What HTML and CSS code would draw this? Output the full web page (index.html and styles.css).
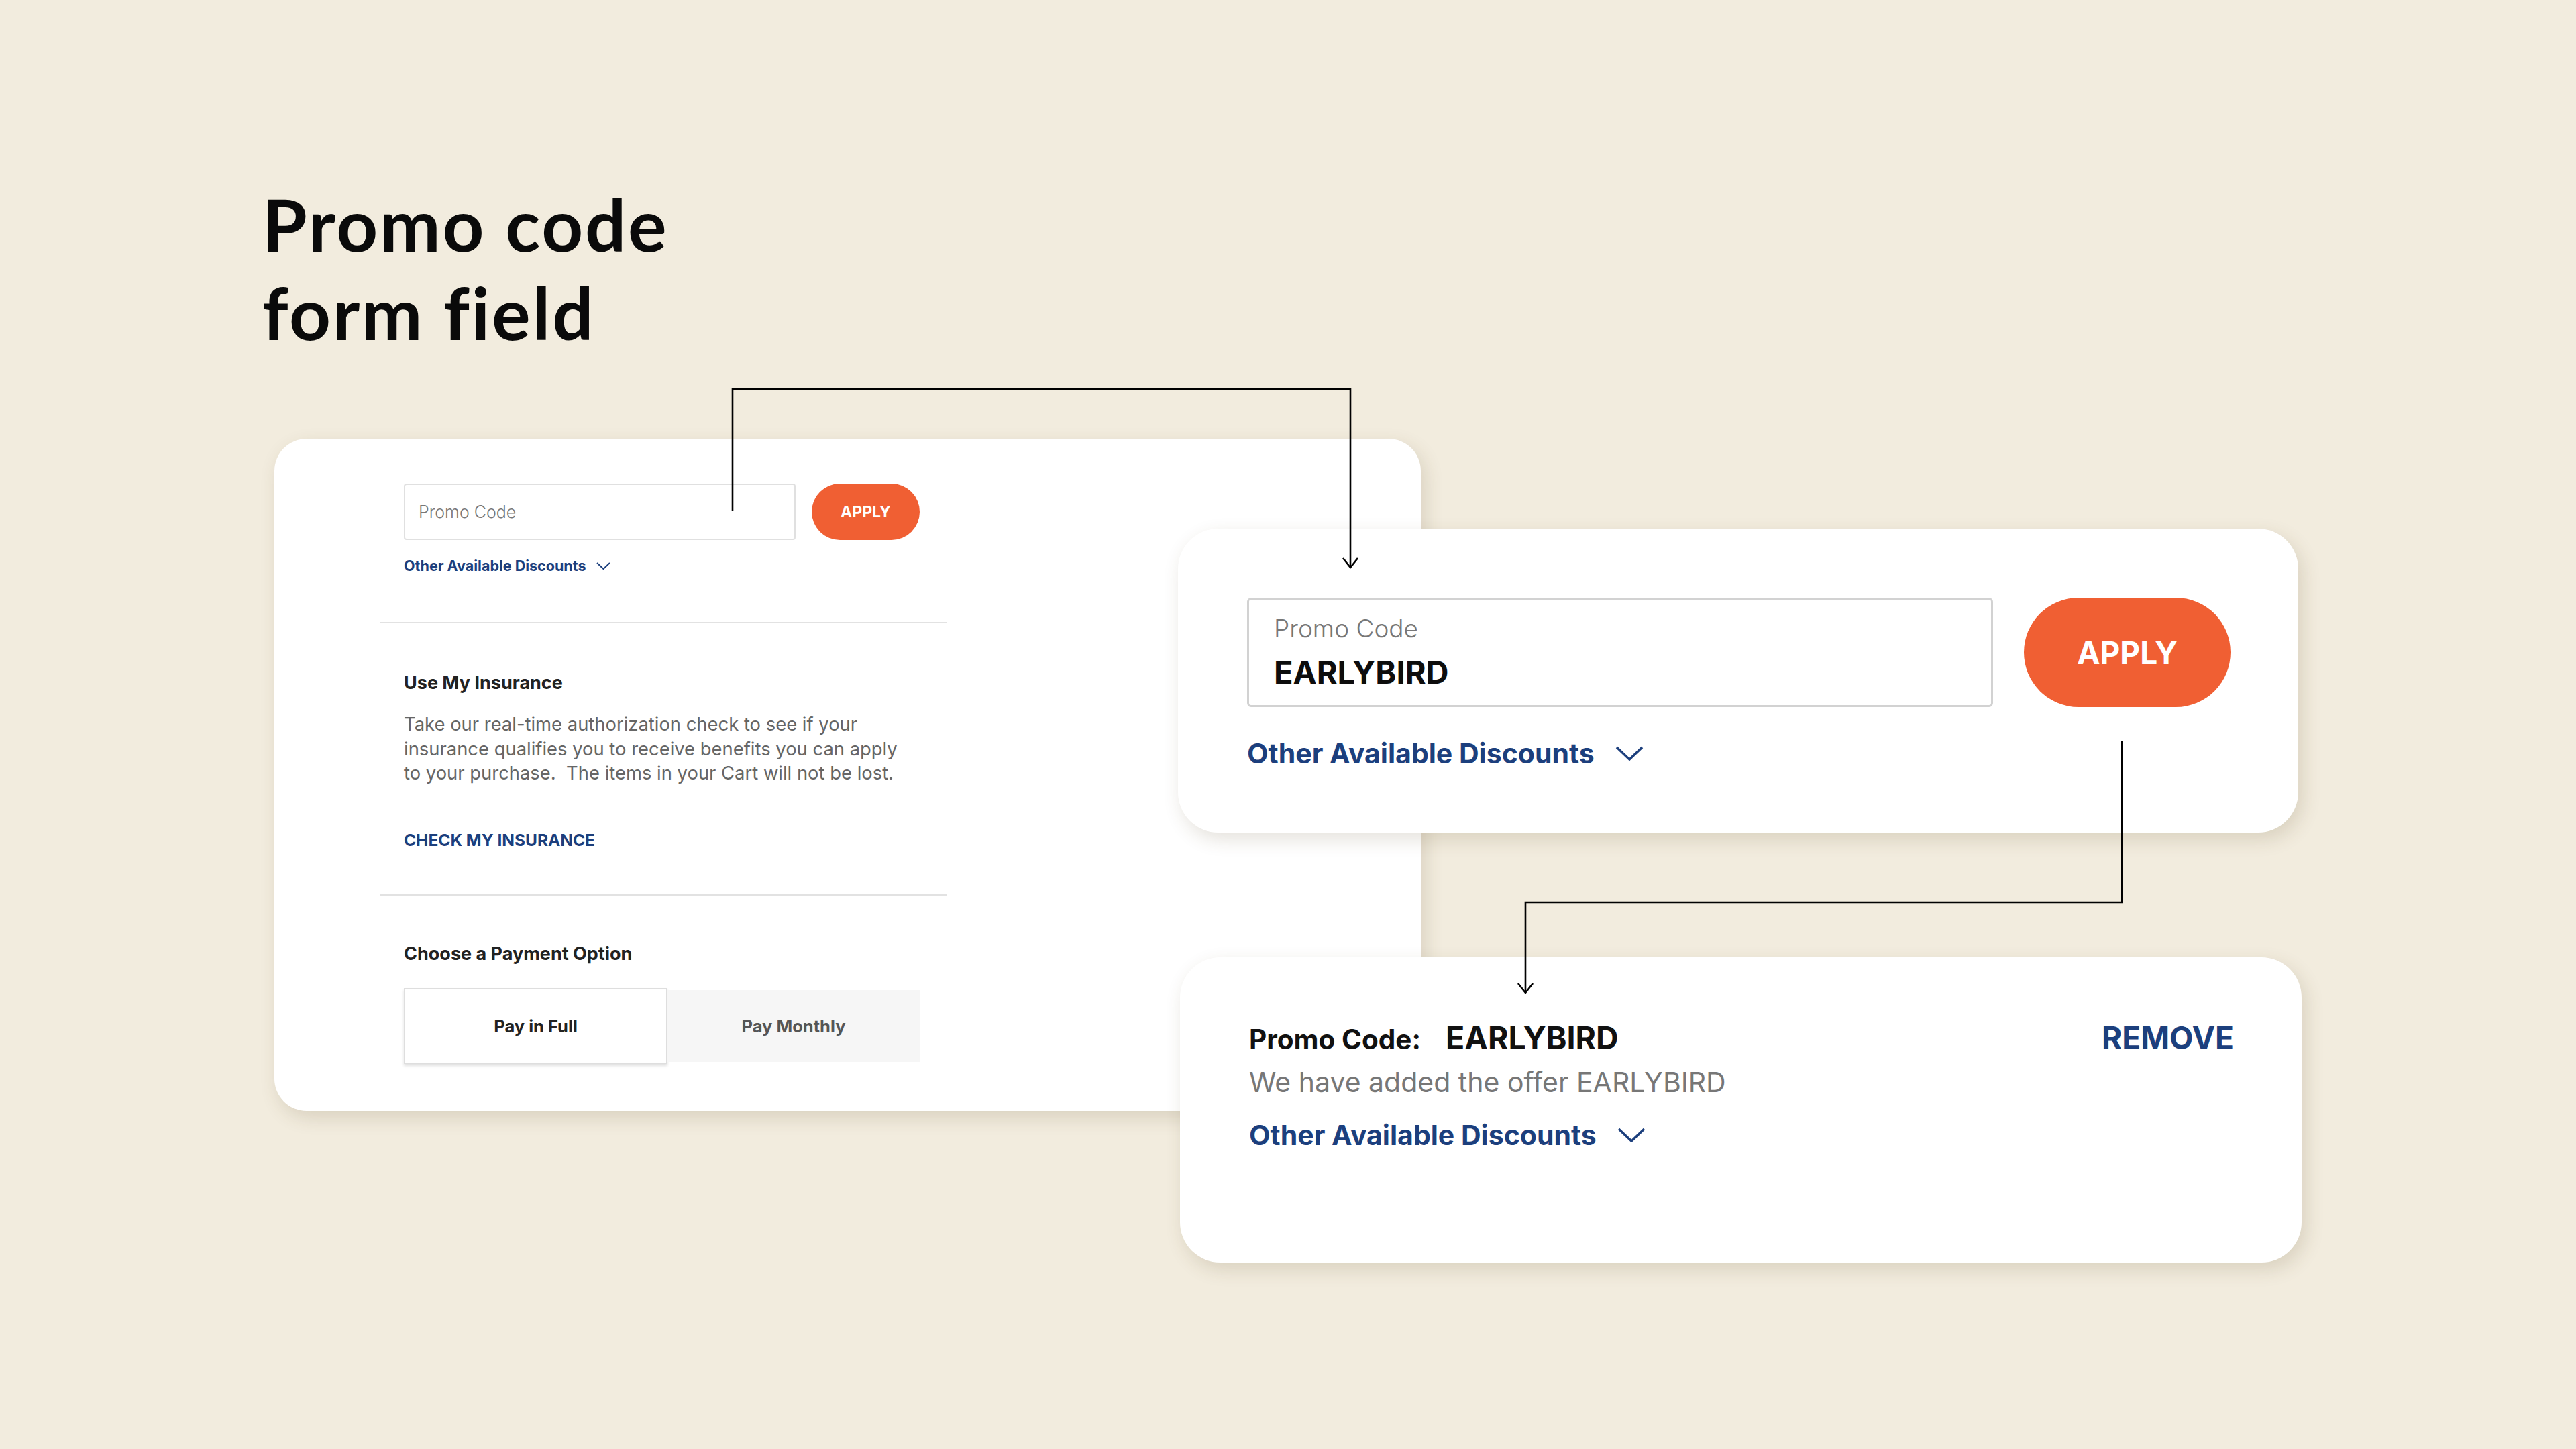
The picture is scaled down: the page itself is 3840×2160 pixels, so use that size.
FILE: index.html
```html
<!DOCTYPE html>
<html lang="en">
<head>
  <meta charset="UTF-8" />
  <meta name="viewport" content="width=device-width, initial-scale=1.0" />
  <title>Promo code form field</title>
  <link rel="stylesheet" href="styles.css">
</head>
<body>

  <main class="board">
    <h1 class="title">Promo code<br>form field</h1>

    <!-- checkout panel, as it sits on the page -->
    <section class="card checkout">
      <div class="checkout-body">
        <div class="block promo-block">
          <div class="promo-row">
            <div class="promo-input">Promo Code</div>
            <button class="apply-btn">APPLY</button>
          </div>
          <a class="discounts-link" href="#">Other Available Discounts
            <svg class="chev" viewBox="0 0 21 11"><path d="M1 1 L10.5 10 L20 1" /></svg>
          </a>
        </div>

        <div class="block insurance-block">
          <h3>Use My Insurance</h3>
          <p>Take our real-time authorization check to see if your<br>
            insurance qualifies you to receive benefits you can apply<br>
            to your purchase.&nbsp; The items in your Cart will not be lost.</p>
          <a class="caps-link" href="#">CHECK MY INSURANCE</a>
        </div>

        <div class="block payment-block">
          <h3>Choose a Payment Option</h3>
          <div class="pay-toggle">
            <div class="pay-option active">Pay in Full</div>
            <div class="pay-option">Pay Monthly</div>
          </div>
        </div>
      </div>
    </section>

    <!-- zoomed: code typed in -->
    <section class="card zoom zoom-entry">
      <div class="big-row">
        <div class="big-input">
          <span class="big-label">Promo Code</span>
          <span class="big-value">EARLYBIRD</span>
        </div>
        <button class="big-apply">APPLY</button>
      </div>
      <a class="discounts-link big" href="#">Other Available Discounts
        <svg class="chev" viewBox="0 0 42 22"><path d="M2 2 L21 20 L40 2" /></svg>
      </a>
    </section>

    <!-- zoomed: code applied -->
    <section class="card zoom zoom-applied">
      <div class="applied-row">
        <div class="applied-code">
          <span class="applied-key">Promo Code:</span>
          <span class="applied-value">EARLYBIRD</span>
        </div>
        <a class="remove-link" href="#">REMOVE</a>
      </div>
      <p class="applied-note">We have added the offer EARLYBIRD</p>
      <a class="discounts-link big" href="#">Other Available Discounts
        <svg class="chev" viewBox="0 0 42 22"><path d="M2 2 L21 20 L40 2" /></svg>
      </a>
    </section>

    <svg class="connectors" viewBox="0 0 3840 2160">
      <path d="M1092 761 V580 H2013 V845" />
      <path d="M2002 832 L2013 846 L2024 832" />
      <path d="M3163 1104 V1345 H2274 V1479" />
      <path d="M2263 1466 L2274 1480 L2285 1466" />
    </svg>
  </main>

</body>
</html>
```

FILE: styles.css
```css
html, body {
  margin: 0;
  padding: 0;
  background-color: #f2ecde;
  font-family: Inter, "Liberation Sans", Arial, sans-serif;
  color: #111;
}

.board {
  position: relative;
  width: 3840px;
  height: 2160px;
  box-sizing: border-box;
  padding: 267px 0 0 409px;
  overflow: hidden;
}

.title {
  margin: 0 0 0 -18px;
  font-family: Lato, "Noto Sans", sans-serif;
  font-weight: 700;
  font-size: 108px;
  line-height: 132px;
  letter-spacing: 2.8px;
  color: #0a0a0a;
}

.card {
  background-color: white;
  box-sizing: border-box;
  box-shadow: 6px 10px 28px rgba(90, 70, 30, 0.16);
}

/* left panel */

.checkout {
  margin-top: 123px;
  width: 1709px;
  height: 1002px;
  border-radius: 48px;
  padding: 67px 0 0 157px;
}

.checkout-body {
  width: 845px;
}

.block {
  padding-left: 36px;
  border-bottom: 2px solid #e2e2e2;
}

.block:last-child {
  border-bottom: none;
}

.block h3 {
  margin: 0;
  font-size: 27px;
  line-height: 31px;
  font-weight: 700;
  color: #222;
}

.promo-block {
  padding-bottom: 71px;
}

.promo-row {
  display: flex;
  gap: 24px;
}

.promo-input {
  width: 584px;
  height: 84px;
  box-sizing: border-box;
  border: 2px solid #e0e0e0;
  border-radius: 4px;
  padding-left: 20px;
  display: flex;
  align-items: center;
  font-size: 25px;
  font-weight: 300;
  color: #777;
}

.apply-btn {
  width: 161px;
  height: 84px;
  border: none;
  border-radius: 42px;
  background-color: #f05f33;
  color: white;
  font-family: inherit;
  font-size: 23px;
  font-weight: 700;
  cursor: pointer;
}

.discounts-link {
  display: inline-flex;
  align-items: center;
  gap: 16px;
  margin-top: 26px;
  font-size: 21.5px;
  line-height: 25px;
  font-weight: 700;
  color: #1c3f7d;
  text-decoration: none;
}

.chev {
  width: 21px;
  height: 11px;
  fill: none;
  stroke: #1c3f7d;
  stroke-width: 2;
}

.insurance-block {
  padding-top: 73px;
  padding-bottom: 66px;
}

.insurance-block p {
  margin: 28px 0 0;
  font-size: 27.4px;
  line-height: 36.7px;
  color: #666;
}

.caps-link {
  display: inline-block;
  margin-top: 67px;
  font-size: 24.5px;
  line-height: 29px;
  font-weight: 700;
  color: #1c3f7d;
  text-decoration: none;
}

.payment-block {
  padding-top: 71px;
}

.pay-toggle {
  display: flex;
  align-items: center;
  margin-top: 36px;
}

.pay-option {
  width: 376px;
  height: 107px;
  display: flex;
  align-items: center;
  justify-content: center;
  background-color: #f6f6f6;
  font-size: 25.5px;
  font-weight: 700;
  color: #555;
}

.pay-option.active {
  width: 393px;
  height: 113px;
  box-sizing: border-box;
  background-color: white;
  border: 2px solid #dedede;
  box-shadow: 0 3px 4px rgba(0, 0, 0, 0.12);
  color: #222;
}

/* zoomed cards */

.zoom {
  position: absolute;
  border-radius: 60px;
  padding: 0 101px 0 103px;
}

.zoom-entry {
  left: 1756px;
  top: 788px;
  width: 1670px;
  height: 453px;
  padding-top: 103px;
}

.big-row {
  display: flex;
  gap: 46px;
}

.big-input {
  flex: 1;
  height: 163px;
  box-sizing: border-box;
  border: 3px solid #d2d2d2;
  border-radius: 6px;
  padding: 20px 0 0 37px;
  display: flex;
  flex-direction: column;
}

.big-label {
  font-size: 37px;
  line-height: 46px;
  font-weight: 300;
  color: #777;
}

.big-value {
  margin-top: 14px;
  font-size: 47px;
  line-height: 56px;
  font-weight: 700;
  color: #0d0d0d;
}

.big-apply {
  width: 308px;
  height: 163px;
  border: none;
  border-radius: 82px;
  background-color: #f05f33;
  color: white;
  font-family: inherit;
  font-size: 46px;
  font-weight: 700;
  cursor: pointer;
}

.discounts-link.big {
  margin-top: 44px;
  gap: 31px;
  font-size: 41px;
  line-height: 50px;
}

.discounts-link.big .chev {
  width: 42px;
  height: 22px;
  stroke-width: 3.5;
}

.zoom-applied {
  left: 1759px;
  top: 1427px;
  width: 1672px;
  height: 455px;
  padding-top: 93px;
}

.applied-row {
  display: flex;
  justify-content: space-between;
  align-items: baseline;
  line-height: 55px;
}

.applied-code {
  display: flex;
  align-items: baseline;
  gap: 37px;
}

.applied-key {
  font-size: 40.5px;
  font-weight: 700;
}

.applied-value {
  font-size: 46.5px;
  font-weight: 700;
}

.remove-link {
  font-size: 46px;
  font-weight: 700;
  color: #1c3f7d;
  text-decoration: none;
}

.applied-note {
  margin: 12px 0 0;
  font-size: 41px;
  line-height: 49px;
  color: #777;
}

.zoom-applied .discounts-link.big {
  margin-top: 29px;
}

.connectors {
  position: absolute;
  left: 0;
  top: 0;
  width: 3840px;
  height: 2160px;
  fill: none;
  stroke: #000;
  stroke-width: 2.6;
  pointer-events: none;
}
```
